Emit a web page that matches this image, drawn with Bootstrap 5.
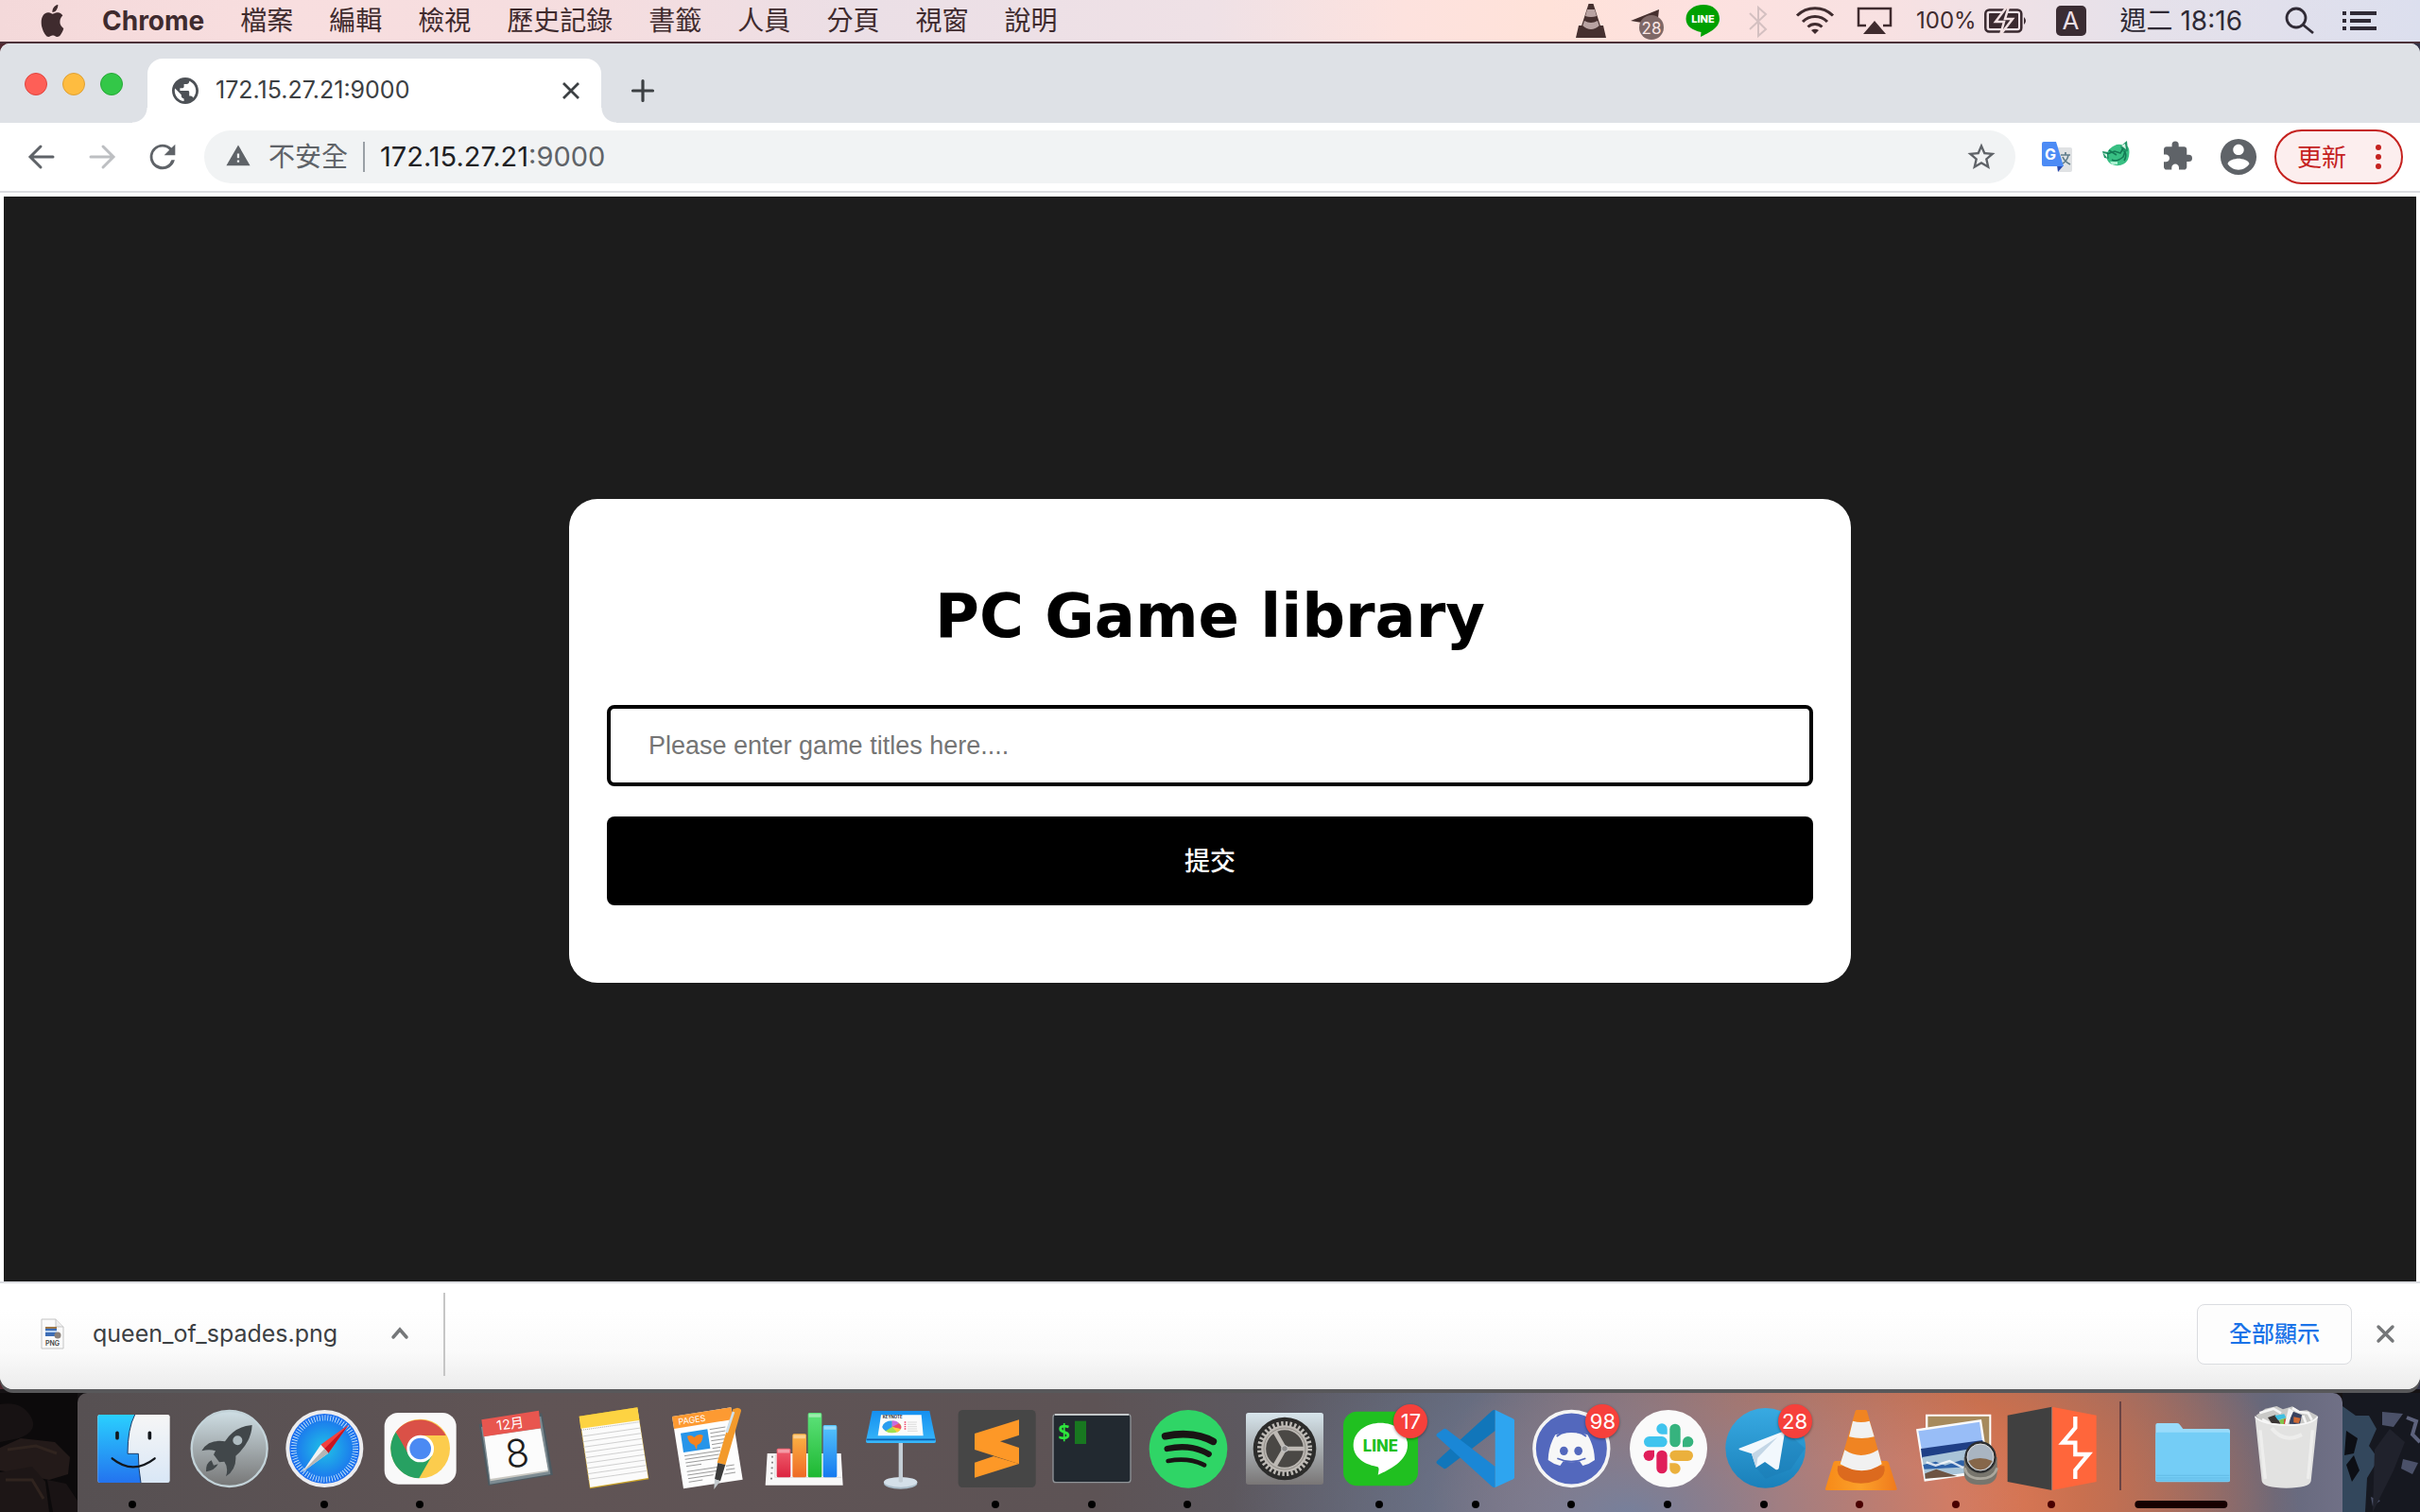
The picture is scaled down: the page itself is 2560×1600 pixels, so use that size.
<!DOCTYPE html>
<html lang="zh-Hant">
<head>
<meta charset="utf-8">
<meta name="viewport" content="width=device-width, initial-scale=1">
<title>172.15.27.21:9000</title>
<link href="https://cdn.jsdelivr.net/npm/bootstrap@5.3.0/dist/css/bootstrap.min.css" rel="stylesheet">
<style>
:root{--ui:Inter,"Noto Sans CJK TC",sans-serif}
body{font-family:var(--ui);background:#151214;color:#3c4043;overflow-x:hidden}
svg{display:block;flex:none;overflow:visible}
button{font-family:inherit}
.plain{background:none;border:0;padding:0;color:inherit}
/* system menu bar */
.sysbar{height:46px;border-bottom:2px solid #4b3038;padding:0 46px 0 41px;font-size:28px;line-height:44px;color:#3f2b2e;white-space:nowrap;
 background:linear-gradient(90deg,#f4d9da 0,#f8dedf 12%,#f5dddf 25%,#ebdfe6 36%,#efe1e6 50%,#fde2de 58%,#ffe2d9 64%,#fde1df 70%,#f8e1e2 78%,#e6e1ea 88%,#dcdfee 100%)}
.sysmenu{gap:38px}
.sysmenu a{color:inherit;text-decoration:none}
.sysicons{gap:20px}
.pct{font-size:24px;margin:0 8px 0 24px}
.ime{width:32px;height:32px;border-radius:5px;background:#3a2c33;color:#eddfe5;font-size:26px;line-height:32px;margin:0 36px 0 30px}
.clock{color:#2f2a35;margin-right:42px}
.find{margin-right:28px}
/* browser window */
.desk{background:linear-gradient(90deg,#50282f,#2a2126 30%,#5f362c 62%,#35364a)}
.win{background:#fff;border-radius:10px 10px 14px 14px;overflow:hidden;box-shadow:0 4px 0 #58585a}
.strip{height:84px;background:#dee1e6;padding:16px 0 0 26px}
.lights{gap:16px;margin:-14px 26px 0 0}
.lights i{width:24px;height:24px;border-radius:50%;border:1px solid #e0443e;background:#fe5f57}
.lights i:nth-child(2){background:#febc40;border-color:#dea034}
.lights i:nth-child(3){background:#33c748;border-color:#27a937}
.tabitem{position:relative;width:480px;height:68px;background:#fff;border-radius:16px 16px 0 0;padding:0 22px 0 26px;font-size:25px;color:#3c4043}
.tabitem::before,.tabitem::after{content:"";position:absolute;bottom:0;width:16px;height:16px}
.tabitem::before{left:-16px;background:radial-gradient(circle at 0 0,transparent 15px,#fff 16px)}
.tabitem::after{right:-16px;background:radial-gradient(circle at 100% 0,transparent 15px,#fff 16px)}
.tabitem span{margin-left:18px}
.newtab{margin-left:30px}
.tools{height:74px;padding:8px 18px 8px 24px;border-bottom:2px solid #dcdde1;color:#5f6368}
.gap24{gap:24px}
.omni{height:56px;border-radius:28px;background:#f1f3f4;margin:0 24px;padding:0 20px;gap:16px;font-size:28px}
.omni .vr{height:32px;width:2px;align-self:center;background:#9aa0a6;opacity:1}
.omni .addr{font-size:29px}
.omni b{font-weight:400;color:#202124}
.upd{height:58px;width:136px;margin-left:18px;border:2px solid #c5221f;border-radius:29px;background:#fceeee;color:#c5221f;font-size:26px;padding:0 20px 0 22px}
/* page */
.stage{padding:4px 4px 0;background:#fff}
.night{background:#1c1c1c;padding-top:4px}
.panel{width:100%;max-width:1356px;background:#fff;border-radius:30px;padding:86px 40px 82px;color:#000}
.panel h1{font:700 64px/76px Verdana,"DejaVu Sans",sans-serif;margin:0 0 56px}
.panel .form-control{height:86px;border:4px solid #000;border-radius:8px;padding:0 40px;font:27px "Liberation Sans",Arial,sans-serif;margin-bottom:32px}
.panel .form-control::placeholder{color:#757575}
.panel .btn{height:94px;border-radius:8px;background:#000;color:#fff;font:500 27px "Liberation Sans","Noto Sans CJK TC",sans-serif;padding:0 0 4px}
/* download shelf */
.shelf{height:114px;border-top:2px solid #dadce0;background:linear-gradient(#fff 25%,#fafafa 65%,#ececec);padding:0 24px 4px 42px;font-size:26px}
.shelf .fname{margin-left:28px;font-size:25px}
.shelf .more{margin-left:52px}
.shelf .vr{height:88px;width:2px;align-self:center;background:#c6c6c6;opacity:1;margin-left:32px}
.showall{width:164px;height:64px;border:1px solid #dadce0;border-radius:8px;background:#fdfdfd;color:#1a73e8;font-size:24px;font-weight:500;margin-right:24px}
/* dock */
.dockrow{margin-top:4px;height:126px}
.wallp{width:82px}
.dock{border-radius:10px 10px 0 0;padding:9px 9px 0 7px;
 background:radial-gradient(ellipse 420px 260px at 1640px 130px,#76809c,transparent),radial-gradient(ellipse 460px 260px at 1890px 120px,#e57b58 20%,#c9704f 50%,transparent),linear-gradient(90deg,#565052,#605455 20%,#5d5355 45%,#5c5f6c 60%,#6a6b7a 70%,#a46b5d 80%,#8d6a68 90%,#65687c 97%,#707086)}
.app{position:relative;flex:1 1 0}
.app svg{width:100px;height:100px}
.dot{width:8px;height:8px;border-radius:50%;background:#000;margin-top:5px}
.hot .dot{background:#4a0000}
.num{position:absolute;left:calc(50% + 15px);top:3px;width:36px;height:36px;border-radius:50%;background:#f6403b;color:#fff;font-size:22px;line-height:36px;text-align:center;box-shadow:0 1px 3px #0006}
.sep{width:45px;height:94px}
.sep i{width:2px;background:#6b4343}
svg text{font-family:var(--ui)}
</style>
<script src="https://cdn.jsdelivr.net/npm/bootstrap@5.3.0/dist/js/bootstrap.bundle.min.js"></script>
</head>
<body class="d-flex flex-column min-vh-100">

<header class="sysbar d-flex justify-content-between align-items-center">
 <nav class="sysmenu d-flex align-items-center">
  <svg width="29" height="34" viewBox="0 0 16 16" preserveAspectRatio="none" fill="#3f2b2e"><path d="M11.182.008C11.148-.03 9.923.023 8.857 1.18c-1.066 1.156-.902 2.482-.878 2.516s1.520.087 2.475-1.258.762-2.391.728-2.430Zm3.314 11.733c-.048-.096-2.325-1.234-2.113-3.422s1.675-2.789 1.698-2.854-.597-.79-1.254-1.157a3.700 3.700 0 0 0-1.563-.434c-.108-.003-.483-.095-1.254.116-.508.139-1.653.589-1.968.607-.316.018-1.256-.522-2.267-.665-.647-.125-1.333.131-1.824.328-.49.196-1.422.754-2.074 2.237-.652 1.482-.311 3.830-.067 4.560s.625 1.924 1.273 2.796c.576.984 1.340 1.667 1.659 1.899s1.219.386 1.843.067c.502-.308 1.408-.485 1.766-.472.357.013 1.061.154 1.782.539.571.197 1.111.115 1.652-.105.541-.221 1.324-1.059 2.238-2.758q.52-1.185.473-1.282Z"/></svg>
  <a href="#" class="fw-bold">Chrome</a><a href="#">檔案</a><a href="#">編輯</a><a href="#">檢視</a><a href="#">歷史記錄</a><a href="#">書籤</a><a href="#">人員</a><a href="#">分頁</a><a href="#">視窗</a><a href="#">說明</a>
 </nav>
 <div class="d-flex align-items-center">
  <div class="sysicons d-flex">
   <svg width="40" height="44" viewBox="0 0 40 44"><path d="M17.500 4h5l8 25H9.500z" fill="#46302f"/><path d="M16 10h8l2 7q-6 2-12 0zM13 22q7 4 14 0l2 6q-9 7-18 0z" fill="#b9a3a2"/><path d="M7 27h4q9 8 18 0h4l3 13H4z" fill="#46302f"/></svg>
   <svg width="40" height="44" viewBox="0 0 40 44"><path d="M2 22 32 10l-2 18-10-2-4 6-2-8z" fill="#46302f"/><circle cx="24" cy="29" r="13" fill="#7f6867"/><text x="24" y="35.500" font-size="17" text-anchor="middle" fill="#fbe6e4">28</text></svg>
   <svg width="40" height="44" viewBox="0 0 40 44"><path d="M19 5C9 5 .500 11 .500 20c0 8 7 12 16 14l-.5 5c8-4 20-9 20-19C36 11 29 5 19 5z" fill="#00a000"/><text x="18.500" y="24" font-size="11" font-weight="800" text-anchor="middle" fill="#fff">LINE</text></svg>
   <svg width="40" height="44" viewBox="0 0 40 44" fill="none" stroke="#d4c0c1" stroke-width="2"><path d="m8 14 17 17-8 7V8l8 7L8 31"/></svg>
   <svg width="40" height="44" viewBox="0 0 40 44" fill="none" stroke="#3f2b2e" stroke-width="3"><path d="M-2 16.500a27 27 0 0 1 38 0M4 23a18 18 0 0 1 26 0M9.500 28.500a11 11 0 0 1 15 0"/><path d="m17 36-4-4q4-2.500 8 0z" fill="#3f2b2e" stroke="none"/></svg>
   <svg width="40" height="44" viewBox="0 0 40 44"><path d="M11 27H3V9h34v18h-8" fill="none" stroke="#3f2b2e" stroke-width="2.500"/><path d="m20 22 12 14H8z" fill="#3f2b2e"/></svg>
  </div>
  <span class="pct">100%</span>
  <svg width="46" height="44" viewBox="0 0 46 44"><rect x="1.300" y="10.500" width="38" height="23" rx="4" fill="none" stroke="#3a2a30" stroke-width="2.500"/><rect x="5" y="14" width="31" height="16" rx="1" fill="#3a2a30"/><path d="M42 18q4 4 0 8z" fill="#3a2a30"/><path d="m24 7-12 16h9l-4 14 13-17h-8l4-13z" fill="#3a2a30" stroke="#f2e1e3" stroke-width="2.500"/></svg>
  <span class="ime text-center">A</span>
  <span class="clock">週二 18:16</span>
  <button class="plain find" aria-label="搜尋"><svg width="36" height="44" viewBox="0 0 36 44" fill="none" stroke="#2f2a35" stroke-width="2.800"><circle cx="15" cy="19" r="10"/><path d="m22 26 11 9"/></svg></button>
  <button class="plain" aria-label="通知中心"><svg width="36" height="44" viewBox="0 0 36 44" stroke="#2f2a35" stroke-width="4"><path d="M0 14h4M0 22h4M0 30h4M8 14h28M8 22h22M8 30h28"/></svg></button>
 </div>
</header>

<div class="desk flex-grow-1 d-flex flex-column">
<div class="win flex-grow-1 d-flex flex-column">
 <div class="strip d-flex align-items-center">
  <div class="lights d-flex"><i></i><i></i><i></i></div>
  <div class="tabitem d-flex align-items-center">
   <svg width="28" height="28" viewBox="2 2 20 20" fill="#4d5156"><path d="M12 2C6.480 2 2 6.480 2 12s4.480 10 10 10 10-4.480 10-10S17.520 2 12 2zm-1 17.930c-3.950-.49-7-3.850-7-7.930 0-.62.080-1.210.210-1.790L9 15v1c0 1.100.9 2 2 2v1.930zm6.900-2.540c-.26-.81-1-1.390-1.900-1.390h-1v-3c0-.55-.45-1-1-1H8v-2h2c.55 0 1-.45 1-1V7h2c1.100 0 2-.9 2-2v-.41c2.930 1.190 5 4.060 5 7.410 0 2.080-.8 3.970-2.100 5.390z"/></svg>
   <span class="flex-grow-1">172.15.27.21:9000</span>
   <button class="plain" aria-label="關閉分頁"><svg width="20" height="20" viewBox="0 0 20 20" stroke="#3c4043" stroke-width="2.800"><path d="m2 2 16 16M18 2 2 18"/></svg></button>
  </div>
  <button class="plain newtab" aria-label="新分頁"><svg width="28" height="28" viewBox="0 0 28 28" stroke="#3c4043" stroke-width="3.200" stroke-linecap="round"><path d="M14 3.500v21M3.500 14h21"/></svg></button>
 </div>
 <div class="tools d-flex align-items-center">
  <div class="d-flex gap24">
   <button class="plain" aria-label="上一頁"><svg width="40" height="40" viewBox="0 0 40 40" fill="none" stroke="#5f6368" stroke-width="3" stroke-linecap="round"><path d="M32 20H9M19 9 8 20l11 11"/></svg></button>
   <button class="plain" aria-label="下一頁"><svg width="40" height="40" viewBox="0 0 40 40" fill="none" stroke="#bdbfc2" stroke-width="3" stroke-linecap="round"><path d="M8 20h23M21 9l11 11-11 11"/></svg></button>
   <button class="plain" aria-label="重新載入"><svg width="40" height="40" viewBox="0 0 24 24" fill="#5f6368"><path d="M17.650 6.350A7.960 7.960 0 0 0 12 4a8 8 0 1 0 7.730 10h-2.080A6.200 6.200 0 1 1 12 5.700c1.660 0 3.140.69 4.300 1.950L13 11h7V4l-2.350 2.350z"/></svg></button>
  </div>
  <div class="omni d-flex align-items-center flex-grow-1">
   <svg width="32" height="32" viewBox="-2 -1 28 28" fill="#5f6368"><path d="M1 21h22L12 2 1 21zm12-3h-2v-2h2v2zm0-4h-2v-4h2v4z"/></svg>
   <span>不安全</span><span class="vr"></span>
   <span class="addr flex-grow-1"><b>172.15.27.21</b>:9000</span>
   <button class="plain" aria-label="加入書籤"><svg width="32" height="32" viewBox="1 1 22 22" fill="#5f6368"><path d="M22 9.240l-7.190-.62L12 2 9.190 8.630 2 9.240l5.460 4.730L5.820 21 12 17.270 18.180 21l-1.630-7.030L22 9.240zM12 15.400l-3.760 2.270 1-4.280-3.320-2.880 4.380-.38L12 6.100l1.710 4.040 4.380.38-3.320 2.880 1 4.280L12 15.400z"/></svg></button>
  </div>
  <div class="d-flex gap24">
   <svg width="40" height="40" viewBox="0 0 40 40"><path d="M16 10h18q2 0 2 2v22q0 2-2 2H22z" fill="#e0e2e4"/><path d="M24 18h10M29 15v3M32 18q-1 7-8 10M26 20q2 5 8 8" stroke="#607d8b" stroke-width="1.700" fill="none"/><path d="m20 29 7 0-6 7z" fill="#2a4bb0"/><path d="M6 4h13l8 26H6q-2 0-2-2V6q0-2 2-2z" fill="#4c8bf5"/><text x="7" y="23" font-size="16" font-weight="700" fill="#fff">G</text></svg>
   <svg width="40" height="40" viewBox="0 0 40 40"><path d="M31 9q3 5 0 14-4 7-13 6-9-1-10-10Q10 10 19 7q4-1 8 1z" fill="#38bf83"/><path d="m23 9 7-6 1 11-5 1zM4 14l6 1 1 7-5-1z" fill="#1f9566"/><path d="m24 8 4-2 1 6zM5 16l4 1v4z" fill="#d5f3e4"/><path d="M9 17l8-3 6 2 3-5M11 13l8 5M14 23q5 3 12-3l2-6M28 15q2 4-1 9" stroke="#147a55" stroke-width="1.600" fill="none"/><path d="M12 25h8v3h-6z" fill="#a9f0d0"/></svg>
   <svg width="40" height="40" viewBox="-1.500 -1.500 28 28" fill="#5f6368"><path d="M20.500 11H19V7c0-1.100-.9-2-2-2h-4V3.500a2.500 2.500 0 0 0-5 0V5H4c-1.100 0-1.990.9-1.990 2v3.800H3.500c1.490 0 2.700 1.210 2.700 2.700s-1.210 2.700-2.700 2.700H2V20c0 1.100.9 2 2 2h3.800v-1.500c0-1.490 1.210-2.700 2.700-2.700 1.490 0 2.700 1.210 2.700 2.700V22H17c1.100 0 2-.9 2-2v-4h1.500a2.500 2.500 0 0 0 0-5z"/></svg>
   <svg width="40" height="40" viewBox="1.500 1.500 21 21" fill="#5f6368"><path d="M12 2C6.480 2 2 6.480 2 12s4.480 10 10 10 10-4.480 10-10S17.520 2 12 2zm0 3c1.660 0 3 1.340 3 3s-1.340 3-3 3-3-1.340-3-3 1.340-3 3-3zm0 14.200c-2.500 0-4.710-1.280-6-3.220.03-1.990 4-3.080 6-3.080 1.990 0 5.970 1.090 6 3.080-1.290 1.940-3.500 3.220-6 3.220z"/></svg>
  </div>
  <button class="upd d-flex align-items-center justify-content-between"><span>更新</span><svg width="8" height="28" viewBox="0 0 8 28" fill="#c5221f"><circle cx="4" cy="4" r="3"/><circle cx="4" cy="14" r="3"/><circle cx="4" cy="24" r="3"/></svg></button>
 </div>

 <main class="stage flex-grow-1 d-flex">
  <div class="night flex-grow-1 d-flex align-items-center justify-content-center">
   <form class="panel text-center" onsubmit="return false">
    <h1 id="heading">PC Game library</h1>
    <input class="form-control" id="titles" type="text" aria-labelledby="heading" placeholder="Please enter game titles here....">
    <button class="btn w-100" type="submit">提交</button>
   </form>
  </div>
 </main>

 <footer class="shelf d-flex align-items-center">
  <svg width="28" height="34" viewBox="0 0 28 34"><path d="M2 1h15l8 8v23H2z" fill="#fafafa" stroke="#c4c4c4"/><path d="M17 1v8h8" fill="#eee" stroke="#c4c4c4"/><path d="M6 9h12v10H6z" fill="#3c6db5"/><path d="M6 9h12v2H6z" fill="#9b7648"/><path d="M6 13h12v2H6z" fill="#b9d3f3"/><circle cx="19" cy="18" r="3.500" fill="#8a8079"/><text x="13.500" y="29" font-size="7" font-weight="600" text-anchor="middle" fill="#444">PNG</text></svg>
  <span class="fname">queen_of_spades.png</span>
  <button class="plain more" aria-label="更多選項"><svg width="28" height="28" viewBox="0 0 28 28" fill="none" stroke="#757779" stroke-width="3.500" stroke-linecap="round"><path d="m7 17 7-8 7 8"/></svg></button>
  <span class="vr me-auto"></span>
  <button class="showall">全部顯示</button>
  <button class="plain" aria-label="關閉"><svg width="24" height="24" viewBox="0 0 24 24" stroke="#757779" stroke-width="3.400" stroke-linecap="round"><path d="m4 4 15 15M19 4 4 19"/></svg></button>
 </footer>
</div>
</div>

<div class="dockrow d-flex">
 <svg class="wallp" height="126" viewBox="0 0 82 126"><path fill="#0c0a0b" d="M0 0h82v126H0z"/><path d="M0 12q22-4 32 12t-12 24L0 52z" fill="#171213"/><path d="M0 58 22 48l36 4 16 16-2 18-20 6L0 82z" fill="#231a19"/><path d="M0 84l34-6 14 16 4 32H0z" fill="#1d1616"/><path d="m50 92 20 4 12 18v12H56z" fill="#191314"/><path d="m8 60 30-4 22 8M6 92l28 0 12 20" stroke="#30241f" stroke-width="3" fill="none"/></svg>

 <div class="dock d-flex flex-grow-1">
  <div class="app d-flex flex-column align-items-center"><svg viewBox="29 39 300 300"><defs><linearGradient id="fa" x2="0" y2="1"><stop stop-color="#2ad0fe"/><stop offset="1" stop-color="#2373ef"/></linearGradient><linearGradient id="fb" x2="0" y2="1"><stop stop-color="#f6f6f6"/><stop offset="1" stop-color="#d9e7f6"/></linearGradient></defs><rect x="69" y="81" width="229" height="216" rx="7" fill="url(#fb)"/><path d="M187 81H76q-7 0-7 7v202q0 7 7 7h130q-8-45-8-92h-34q0-80 23-124z" fill="url(#fa)"/><path d="M187 81q-23 44-23 124h34q0 47 8 92" fill="none" stroke="#1d3b66" stroke-width="3"/><path d="M131 139v16M234 139v16" stroke="#13171c" stroke-width="11" stroke-linecap="round"/><path d="M115 220q66 54 135 0" fill="none" stroke="#13171c" stroke-width="7" stroke-linecap="round"/></svg><span class="dot"></span></div>
  <div class="app d-flex flex-column align-items-center"><svg viewBox="334 39 300 300"><defs><linearGradient id="la" x2="0" y2="1"><stop stop-color="#cfdfe5"/><stop offset="1" stop-color="#767676"/></linearGradient></defs><circle cx="489" cy="189" r="120" fill="url(#la)" stroke="#c3d3d9" stroke-width="7"/><path d="M561 114q-56 4-86 52-52-8-74 30 24-7 44 0l-6 12 18 24 16-2q14 20 5 47 34-22 31-65 50-44 52-98z" fill="#41474a"/><circle cx="515" cy="163" r="15" fill="#aebbc0"/><path d="M432 226q-18 8-17 36 28-4 38-24l-14 4z" fill="#41474a"/></svg></div>
  <div class="app d-flex flex-column align-items-center"><svg viewBox="638 39 300 300"><defs><radialGradient id="sa"><stop stop-color="#20c2e6"/><stop offset="1" stop-color="#1b6cef"/></radialGradient></defs><circle cx="789" cy="189" r="123" fill="#ececee"/><circle cx="789" cy="189" r="111" fill="url(#sa)"/><circle cx="789" cy="189" r="98" fill="none" stroke="#cfe9fb" stroke-width="18" stroke-dasharray="2.500 6.050"/><path d="m865 113-88 63 24 27z" fill="#f1413f"/><path d="m865 113-64 90-12-14z" fill="#c91420"/><path d="m718 264 59-88 24 27z" fill="#f3f3f3"/><path d="m718 264 83-61-12-14z" fill="#b5b5b5"/></svg><span class="dot"></span></div>
  <div class="app d-flex flex-column align-items-center"><svg viewBox="943 39 300 300"><rect x="981" y="75" width="228" height="227" rx="44" fill="#f9f9f9"/><circle cx="1095" cy="189" r="94" fill="#fccc4d"/><path d="M1017 136a94 94 0 0 0 74 147l40-70-36-24-40 0z" fill="#27a162"/><path d="M1017 136a94 94 0 0 1 159 11h-81l-40 56z" fill="#da5147"/><circle cx="1095" cy="189" r="43" fill="#fff"/><circle cx="1095" cy="189" r="34" fill="#4b8af3"/></svg><span class="dot"></span></div>
  <div class="app d-flex flex-column align-items-center"><svg viewBox="1248 39 300 300"><path d="m1280 112 200-36 35 196-205 34z" fill="#4d5a61"/><path d="m1287 120 190-34 30 184-192 32z" fill="#7d8b92"/><path d="m1300 150 176-26 24 138-184 30z" fill="#c9c8c2"/><path d="m1297 150 178-25 24 132-183 28z" fill="#fcfcfc"/><path d="m1288 97 182-29 6 56-181 27z" fill="#e8564f"/><g transform="rotate(-8 1395 180)" text-anchor="middle"><text x="1389" y="124" font-size="43" fill="#fff">12月</text><text x="1398" y="248" font-size="122" font-weight="300" fill="#1e1e1e">8</text></g></svg></div>
  <div class="app d-flex flex-column align-items-center"><svg viewBox="52 39 300 300"><path d="m99 86 185-28 36 228-187 30z" fill="#c9a227"/><path d="m101 90 183-27 34 219-184 30z" fill="#fbfbfb"/><path d="m99 86 185-28 6 41-186 26z" fill="#fdd342"/><path d="m106 130 186-26" stroke="#aaa" stroke-width="3" stroke-dasharray="3 3"/><path d="m108 150 186-27M111 167l186-27M113 184l186-27M116 201l186-27M118 218l186-27M121 235l186-27M123 252l186-27M126 269l186-27M128 286l186-27" stroke="#c7c7c7" stroke-width="2.500"/></svg></div>
  <div class="app d-flex flex-column align-items-center"><svg viewBox="357 39 300 300"><path d="m393 87 187-29 37 229-188 29z" fill="#fdfdfd"/><path d="m393 87 187-29 6 38-187 30z" fill="#fd9a32"/><text x="414" y="113" font-size="27" fill="#fff" transform="rotate(-8 414 113)">PAGES</text><path d="m420 140 85-13 9 61-85 13z" fill="#2795e9"/><path d="M441 149q12-6 22 4 14-14 28-6-2 26-18 30l-2 16-8-16q-18-4-22-28z" fill="#f5831f"/><path d="m512 128 50-8M514 140l48-8M515 152l46-7M517 164l42-6M519 176l36-6M521 188l26-4M432 212l114-17M434 223l108-16M436 234l104-15M438 245l48-7M440 262l100-15M590 240l-26 4M442 273l94-14M592 252l-28 4M444 284l80-12M594 264l-36 6M446 295l44-7" stroke="#9a9a9a" stroke-width="3"/><path d="m586 64 14-5q13 2 12 10l-50 172-26-8z" fill="#f39a2b"/><path d="m588 72-22 66" stroke="#cfe0ea" stroke-width="8"/><path d="m538 234 24 6-16 52-18-6z" fill="#3b3b3b"/><path d="m528 286 18 6-20 26z" fill="#c3c9cd"/></svg></div>
  <div class="app d-flex flex-column align-items-center"><svg viewBox="661 39 300 300"><defs><linearGradient id="n1" x2="0" y2="1"><stop stop-color="#f0606f"/><stop offset="1" stop-color="#dc2440"/></linearGradient><linearGradient id="n2" x2="0" y2="1"><stop stop-color="#fcb445"/><stop offset="1" stop-color="#ee6a25"/></linearGradient><linearGradient id="n3" x2="0" y2="1"><stop stop-color="#5de27a"/><stop offset="1" stop-color="#1eb832"/></linearGradient><linearGradient id="n4" x2="0" y2="1"><stop stop-color="#56c5fb"/><stop offset="1" stop-color="#157af0"/></linearGradient></defs><path d="M696 204h234l6 101H690z" fill="#f8f8f8"/><path d="M722 206l-2 74h212" stroke="#ddd" stroke-width="3" fill="none"/><path d="M709 215h6M709 233h6M708 250h6M707 267h6M706 284h6" stroke="#888" stroke-width="5"/><rect x="726" y="188" width="44" height="92" rx="5" fill="url(#n1)"/><rect x="776" y="142" width="44" height="138" rx="5" fill="url(#n2)"/><rect x="825" y="75" width="44" height="205" rx="5" fill="url(#n3)"/><rect x="873" y="114" width="44" height="166" rx="5" fill="url(#n4)"/><path d="M729 197h38M779 151h38M828 84h38M876 123h38" stroke="#fff" stroke-opacity=".4" stroke-width="11"/></svg></div>
  <div class="app d-flex flex-column align-items-center"><svg viewBox="966 39 300 300"><defs><linearGradient id="ka" x2="0" y2="1"><stop stop-color="#1590f0"/><stop offset="1" stop-color="#38b7fa"/></linearGradient></defs><ellipse cx="1118" cy="299" rx="53" ry="18" fill="#a9bcc9"/><ellipse cx="1118" cy="295" rx="53" ry="16" fill="#d4e0e9"/><path d="M1112 168h13v126q-6 4-13 0z" fill="#c4ced6"/><path d="M1028 69h182l20 96q0 6-5 6h-212q-5 0-5-6z" fill="url(#ka)"/><path d="M1010 160h218" stroke="#0b5fae" stroke-width="5"/><path d="M1056 82h128l6 66h-144z" fill="#fbfbfb"/><text x="1061" y="94" font-size="13" font-weight="700" fill="#333">KEYNOTE</text><ellipse cx="1091" cy="120" rx="29" ry="19" fill="#a3e04e"/><path d="M1091 120l-20 13q-22-14 0-28 10-5 20-4z" fill="#2a9df0"/><path d="M1091 120v-20q16 0 22 9z" fill="#c76be0"/><path d="M1091 120l22-11q10 8 6 18z" fill="#f0486a"/><path d="M1091 120l28 7q-4 8-12 10z" fill="#fccd3d"/><path d="M1130 105h5M1130 112h5M1130 119h5M1130 126h5" stroke="#e46" stroke-width="4"/><path d="M1140 105h30M1140 112h28M1140 119h30M1140 126h30M1140 133h32" stroke="#ccc" stroke-width="2"/></svg></div>
  <div class="app d-flex flex-column align-items-center"><svg viewBox="1270 39 300 300"><rect x="1302" y="66" width="246" height="246" rx="14" fill="#464646"/><path d="m1354 233 60-20 81 24-141 44z" fill="#fd9827"/><path d="m1414 211 81-26v52z" fill="#e07e16"/><path d="m1354 141 141-44v49l-60 20 60 20v51l-141-45z" fill="#fd9827"/></svg><span class="dot"></span></div>
  <div class="app d-flex flex-column align-items-center"><svg viewBox="75 39 300 300"><rect x="102" y="80" width="246" height="216" rx="9" fill="#222930" stroke="#8f9498" stroke-width="4"/><path d="M108 81h234" stroke="#e0e4e6" stroke-width="4"/><text x="118" y="163" font-size="68" font-weight="600" fill="#2ee63d" style="font-family:'Noto Sans'">$</text><rect x="171" y="101" width="36" height="73" fill="#187720"/></svg><span class="dot"></span></div>
  <div class="app d-flex flex-column align-items-center"><svg viewBox="379 39 300 300"><circle cx="532" cy="190" r="124" fill="#2fd566"/><g fill="none" stroke="#191414" stroke-linecap="round"><path d="M459 149q88-18 152 17" stroke-width="23"/><path d="M465 189q76-16 132 17" stroke-width="19"/><path d="M468 228q66-12 115 13" stroke-width="14"/></g></svg><span class="dot"></span></div>
  <div class="app d-flex flex-column align-items-center"><svg viewBox="684 39 300 300"><defs><linearGradient id="pa" x2="0" y2="1"><stop stop-color="#d7e5ec"/><stop offset="1" stop-color="#797676"/></linearGradient></defs><rect x="714" y="75" width="246" height="228" rx="8" fill="url(#pa)"/><circle cx="837" cy="189" r="100" fill="#2c2c2b"/><circle cx="837" cy="189" r="79" fill="none" stroke="#bdbab5" stroke-width="16" stroke-dasharray="7 6.790"/><circle cx="837" cy="189" r="67" fill="#4a4845" stroke="#bdb9b4" stroke-width="15"/><path d="M837 189h62M837 189l-31-54M837 189l-31 54" stroke="#bdb9b4" stroke-width="14"/><circle cx="837" cy="189" r="66" fill="none" stroke="#79756f" stroke-width="2"/><circle cx="837" cy="189" r="10" fill="#8d8c8c" stroke="#ccc" stroke-width="3"/></svg></div>
  <div class="app d-flex flex-column align-items-center"><svg viewBox="989 39 300 300"><rect x="1025" y="71" width="237" height="236" rx="44" fill="#20c020"/><path d="M1143 107c-48 0-86 30-86 71 0 36 30 60 74 68 8 2 8 6 4 26 34-14 94-44 94-94 0-41-38-71-86-71z" fill="#fff"/><text x="1143" y="198" font-size="50" font-weight="800" text-anchor="middle" fill="#20c020">LINE</text></svg><span class="num">17</span><span class="dot"></span></div>
  <div class="app d-flex flex-column align-items-center"><svg viewBox="1293 39 300 300"><path d="m1320 236 22 16q5 2 10-2L1505 132V66q-6-1-11 4L1320 228q-3 4 0 8z" fill="#1176ba"/><path d="m1320 142 22-16q5-2 10 2l153 118v66q-6 1-11-4L1320 150q-3-4 0-8z" fill="#1a87d6"/><path d="M1505 66l57 28q4 2 4 6v180q0 4-4 6l-57 26z" fill="#2ea5f0"/></svg><span class="dot"></span></div>
  <div class="app d-flex flex-column align-items-center"><svg viewBox="98 39 300 300"><circle cx="249" cy="189" r="118" fill="#5368bd" stroke="#f4f4f4" stroke-width="11"/><path d="M198 145q50-14 102 0 22 36 23 80-18 14-38 18l-10-14q-26 6-52 0l-10 14q-20-4-38-18 1-44 23-80z" fill="#f7f7f7"/><path d="M202 150q14-12 30-14M296 150q-14-12-30-14M204 220q44 20 90 0" stroke="#5368bd" stroke-width="5" fill="none"/><ellipse cx="225" cy="196" rx="13" ry="14" fill="#5368bd"/><ellipse cx="271" cy="196" rx="13" ry="14" fill="#5368bd"/></svg><span class="num">98</span><span class="dot"></span></div>
  <div class="app d-flex flex-column align-items-center"><svg viewBox="402 39 300 300"><circle cx="555" cy="189" r="123" fill="#fafafa"/><g fill="#3fc4ee"><path d="M551 143h-17a17 17 0 1 1 17-17z"/><rect x="477" y="150" width="74" height="34" rx="17"/></g><g fill="#36b37e"><rect x="559" y="110" width="34" height="74" rx="17"/><path d="M600 184v-17a17 17 0 1 1 17 17z"/></g><g fill="#e01e5a"><path d="M510 194v17a17 17 0 1 1-17-17z"/><rect x="517" y="194" width="34" height="74" rx="17"/></g><g fill="#ebb03c"><rect x="559" y="194" width="74" height="34" rx="17"/><path d="M559 235h17a17 17 0 1 1-17 17z"/></g></svg><span class="dot"></span></div>
  <div class="app d-flex flex-column align-items-center"><svg viewBox="707 39 300 300"><defs><linearGradient id="ta" x2="0" y2="1"><stop stop-color="#38aae2"/><stop offset="1" stop-color="#1a80ba"/></linearGradient></defs><circle cx="862" cy="187" r="127" fill="url(#ta)"/><path d="m832 250 30 34 80-30 45-66-62-56z" fill="#1a78b2" opacity=".35"/><path d="m778 188 146-56-20 120q-4 6-10 3l-34-24-28 18-14-44-38-12q-4-2-2-5z" fill="#f2f8fd"/><path d="m818 206 82-54-63 66-5 32z" fill="#c3d6e6"/></svg><span class="num">28</span><span class="dot"></span></div>
  <div class="app hot d-flex flex-column align-items-center"><svg viewBox="1012 39 300 300"><defs><linearGradient id="va"><stop stop-color="#f78a18"/><stop offset=".5" stop-color="#fba02a"/><stop offset="1" stop-color="#f07a1c"/></linearGradient></defs><path d="M1086 228h162q5 0 7 6l26 82q0 5-5 5h-218q-5 0-4-5l25-82q2-6 7-6z" fill="url(#va)"/><path d="M1093 244h148q6 30-20 44-54 22-108 0-26-14-20-44z" fill="#dc6a1e"/><path d="M1155 66h26q4 0 5 4l47 166q-66 44-132 0l48-166q1-4 6-4z" fill="#f08422"/><path d="m1141 101q26 8 53 0l15 50q-40 10-80 0zM1115 193q52 34 106 0l12 45q-62 42-132 0z" fill="#f1f1f1"/></svg><span class="dot"></span></div>
  <div class="app hot d-flex flex-column align-items-center"><svg viewBox="1316 39 300 300"><path d="M1370 80h208v140h-208z" fill="#fff"/><path d="M1377 86h195v126h-195z" fill="#a68a5c"/><path d="m1340 127 207-31 26 168-207 29z" fill="#fafafa"/><path d="m1347 133 194-29 10 68-194 17z" fill="#98bdf7"/><path d="m1355 189 196-27 3 24-195 34z" fill="#1f3f86"/><path d="m1359 216 195-34 12 74-197 28z" fill="#a9c4d8"/><path d="m1362 240 40-10 30 12 50-16 80 8v10l-196 10z" fill="#2f62a8"/><path d="m1368 268 36-14 46 16 20 6-101 8z" fill="#6d5443"/><path d="m1372 232 30 10 44-14 40 20 66-6" stroke="#fff" stroke-width="7" fill="none" opacity=".8"/><path d="M1492 216v48q0 40 52 40t53-40v-48z" fill="#77756d"/><path d="M1494 250q8 34 50 34t53-34" fill="none" stroke="#aaa79d" stroke-width="8"/><circle cx="1544" cy="216" r="50" fill="#2c2e30"/><circle cx="1544" cy="216" r="42" fill="#a9b5c2" stroke="#ddd" stroke-width="3"/><path d="M1506 228q36-18 76 0-14 28-38 28t-38-28z" fill="#86674a"/></svg><span class="dot"></span></div>
  <div class="app hot d-flex flex-column align-items-center"><svg viewBox="121 39 300 300"><path d="m132 83 141-27v265l-141-27z" fill="#404040"/><path d="m273 56 141 27v211l-141 27z" fill="#ff663b"/><path d="M273 56v265" stroke="#8b7a74" stroke-width="3"/><path d="M347 87v36l-40 47h40v37h42l-42 50v28" fill="none" stroke="#fff" stroke-width="13"/></svg><span class="dot"></span></div>
  <div class="sep d-flex justify-content-center"><i></i></div>
  <div class="app d-flex flex-column align-items-center"><svg viewBox="560 39 300 300"><path d="M606 108h62q5 0 8 4l11 14h143q6 0 6 6v156q0 6-6 6H606q-6 0-6-6V114q0-6 6-6z" fill="#99dbfb"/><path d="M606 137h224q6 0 6 6v146q0 6-6 6H606q-6 0-6-6V143q0-6 6-6z" fill="#74cdf6"/><path d="M602 274h232M602 282h232M602 289h232" stroke="#5cb4dd" stroke-width="2"/><rect x="534" y="354" width="294" height="24" rx="12" fill="#160000"/></svg></div>
  <div class="app d-flex flex-column align-items-center"><svg viewBox="865 39 300 300"><path d="m920 84 30-22 36-8 20 10 30-9 22 14 24-2 34 18-30 34H950z" fill="#c9c9c7"/><path d="m932 76 44-14 24 14M1036 60l20 12 30 4 12 22M940 96l24 12M1070 84l10 26" stroke="#f5f5f5" stroke-width="8" fill="none"/><path d="m958 90 24-8 18 30-30-4z" fill="#3a3433"/><path d="m980 84 30-5 6 12-26 7z" fill="#3fbfe0"/><path d="m994 98 26-8-4 24-16 0z" fill="#7fc24a"/><path d="m1010 96 10-3-3 20-8 0z" fill="#d5423a"/><path d="m1034 70 32 12-6 30-34-2z" fill="#39425f"/><path d="m1040 88 22 4-6 16-16-2z" fill="#cf6a35"/><path d="m1024 60-12 50 8 3 20-44z" fill="#f4f4f4"/><path d="m917 84q20 26 100 29t100-29l-22 208q-4 22-78 22t-78-22z" fill="#e2e2e1"/><path d="M918 88q20 24 99 26t99-26" fill="none" stroke="#f8f8f8" stroke-width="5"/><path d="M970 124q40 50 96 20" stroke="#f2f2f1" stroke-width="12" fill="none" opacity=".7"/><path d="m934 130 16 155M1100 130l-14 155" stroke="#f2f2f1" stroke-width="10" opacity=".8"/></svg></div>
 </div>

 <svg class="wallp" height="126" viewBox="0 0 82 126"><path fill="#161820" d="M0 0h82v126H0z"/><path d="M0 14l14 10 14 0 8 14-8 18 10 14-12 20-2 36H0z" fill="#33475c"/><path d="m4 40 12 8-4 16-10 2zM4 76l8-10 6 16-8 12z" fill="#0d0f15"/><path d="m42 20 22 2-10 14-12-2zM64 70l16 4-6 12-12-6zM30 110l10 4-8 6z" fill="#4b5169"/><path d="m34 60 16-22 16 14-12 30-22 44" fill="#20222c"/><path d="m68 26 10 4-4 14 8 8" stroke="#5d627c" stroke-width="4" fill="none"/></svg>
</div>
</body>
</html>
